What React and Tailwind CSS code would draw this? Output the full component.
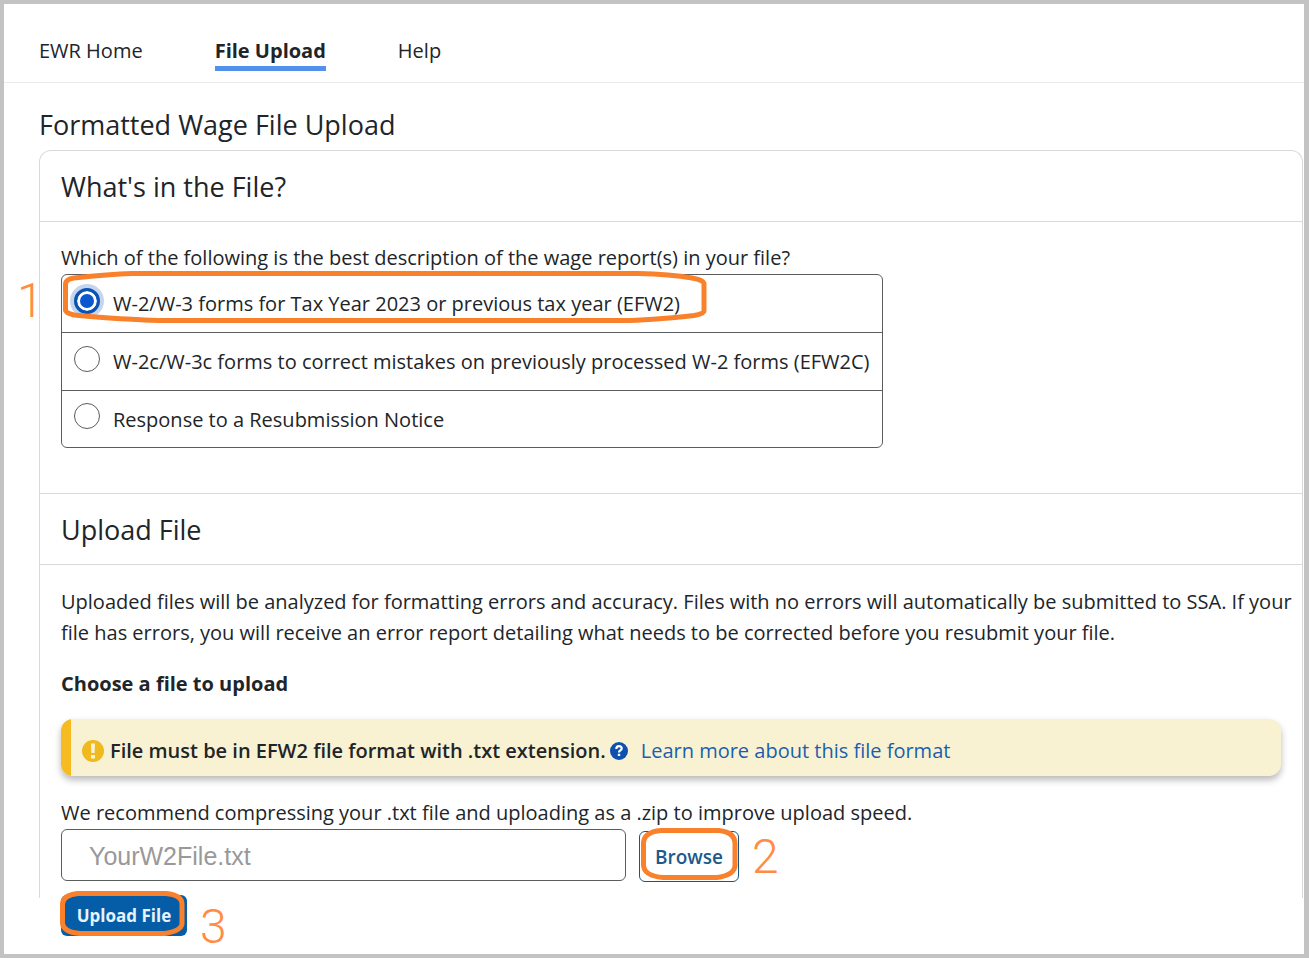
import { useState } from "react";
import clsx from "clsx";

const NAV_ITEMS = ["EWR Home", "File Upload", "Help"];

const REPORT_TYPES = [
  { value: "efw2", label: "W-2/W-3 forms for Tax Year 2023 or previous tax year (EFW2)" },
  { value: "efw2c", label: "W-2c/W-3c forms to correct mistakes on previously processed W-2 forms (EFW2C)" },
  { value: "resub", label: "Response to a Resubmission Notice" },
];

export default function App() {
  const [reportType, setReportType] = useState("efw2");
  const [fileName, setFileName] = useState("YourW2File.txt");

  return (
    <div className="min-h-screen border-4 border-r-[5px] border-[#c3c3c3] bg-white font-['Open_Sans',sans-serif] text-[20px] leading-[31px] text-[#212529]">
      {/* Top navigation */}
      <nav className="flex h-[79px] items-center gap-[72px] border-b border-[#ebebeb] pt-5 pl-[35px]">
        {NAV_ITEMS.map((item) => (
          <a
            key={item}
            href="#"
            className={clsx(
              "border-b-[5px]",
              item === "File Upload" ? "border-[#5291ea] font-bold" : "border-transparent"
            )}
          >
            {item}
          </a>
        ))}
      </nav>

      <main className="pr-px pl-[35px]">
        <h1 className="pt-6 pb-[7px] text-[27px] leading-[36px]">Formatted Wage File Upload</h1>

        <div className="rounded-t-xl border border-b-0 border-[#d9d9d9]">
          <SectionTitle>What's in the File?</SectionTitle>

          <fieldset className="px-[21px] pt-5 pb-[45px]">
            <legend className="float-left mb-px">
              Which of the following is the best description of the wage report(s) in your file?
            </legend>
            <div className="relative clear-both max-w-[822px] rounded-md border border-[#5c5c5c]">
              <div>
                {REPORT_TYPES.map((type) => (
                  <ReportOption
                    key={type.value}
                    {...type}
                    checked={reportType === type.value}
                    onSelect={setReportType}
                  />
                ))}
              </div>
              <OptionMarker />
              <StepNumber className="top-0 -left-[45px]">1</StepNumber>
            </div>
          </fieldset>

          <div className="border-t border-[#d9d9d9]">
            <SectionTitle>Upload File</SectionTitle>
          </div>

          <div className="px-[21px] pt-[21px] pb-4">
            <p className="-mr-3">
              Uploaded files will be analyzed for formatting errors and accuracy. Files with no errors will
              automatically be submitted to SSA. If your file has errors, you will receive an error report
              detailing what needs to be corrected before you resubmit your file.
            </p>
            <h3 className="mt-5 font-bold">Choose a file to upload</h3>

            <div className="mt-5 flex h-[57px] overflow-hidden rounded-xl bg-[#f9f2d2] shadow-[0_4px_7px_rgba(0,0,0,0.28)]">
              <div className="w-[10px] shrink-0 bg-[#f5bb20]" />
              <div className="flex items-center pt-1.5 pl-[11px]">
                <AlertIcon />
                <strong className="ml-[6px] font-semibold">
                  File must be in EFW2 file format with .txt extension.
                </strong>
                <HelpIcon />
                <a href="#" className="ml-[13px] text-[#1a5fae]">
                  Learn more about this file format
                </a>
              </div>
            </div>

            <label htmlFor="wage-file" className="mt-[21px] block">
              We recommend compressing your .txt file and uploading as a .zip to improve upload speed.
            </label>
            <div className="mt-px flex items-start">
              <input
                id="wage-file"
                type="text"
                value={fileName}
                onChange={(e) => setFileName(e.target.value)}
                className="h-[52px] w-[565px] rounded-md border border-[#5c5c5c] pt-0.5 pl-[27px] font-['Liberation_Sans',sans-serif] text-[25px] text-[#999]"
              />
              <div className="relative mt-0.5 ml-[13px]">
                <button
                  type="button"
                  className="h-[51px] w-[100px] rounded-md border border-[#1b5480] pt-0.5 text-[19px] font-semibold text-[#1b5a8a]"
                >
                  Browse
                </button>
                <BrowseMarker />
                <StepNumber className="top-0 left-[113px]">2</StepNumber>
              </div>
            </div>
          </div>
        </div>

        <div className="relative -mt-[3px] ml-[22px] w-[126px]">
          <button
            type="button"
            className="block h-[41px] w-full rounded-md bg-[#045da6] text-[17px] font-bold text-[#e6f3ff]"
          >
            Upload File
          </button>
          <UploadMarker />
          <StepNumber className="top-1.5 left-[139px]">3</StepNumber>
        </div>
      </main>
    </div>
  );
}

function SectionTitle({ children }) {
  return (
    <h2 className="flex h-[71px] items-center border-b border-[#d9d9d9] pt-0.5 pl-[21px] text-[27px] leading-[36px]">
      {children}
    </h2>
  );
}

function ReportOption({ value, label, checked, onSelect }) {
  return (
    <label className="flex h-[58px] items-center border-b border-[#5c5c5c] pl-3 last:h-[56px] last:border-b-0">
      <input
        type="radio"
        name="report-type"
        value={value}
        checked={checked}
        onChange={() => onSelect(value)}
        className="mb-1.5 size-[26px] shrink-0 appearance-none rounded-full border border-[#5c5c5c] bg-white checked:border-[3px] checked:border-[#0b52b5] checked:bg-[#0b57d0] checked:shadow-[inset_0_0_0_3px_#fff,0_0_0_4px_#c5d6ec]"
      />
      <span className="ml-[13px]">{label}</span>
    </label>
  );
}

function StepNumber({ className, children }) {
  return (
    <span
      className={clsx(
        "pointer-events-none absolute font-['Roboto',sans-serif] text-[48px] leading-[52px] font-light text-[#ff8c42]",
        className
      )}
    >
      {children}
    </span>
  );
}

// Hand-drawn outlines around the control of each step
function OptionMarker() {
  return (
    <svg
      className="pointer-events-none absolute -top-[4px] left-0"
      width="650"
      height="54"
      viewBox="0 0 650 54"
      fill="none"
      stroke="#fa812b"
      strokeWidth="5"
      strokeLinejoin="round"
    >
      <path d="M70 2.500 H576 C602 3 616 4.500 630 7 Q642 9 642 13 V40 Q642 43 632 44.500 C600 48 580 49.500 560 49.500 H96 C60 48 30 46 12 44 Q3 42 3.500 39 V13 Q4 8 12 7 C30 5 50 3 70 2.500 Z" />
    </svg>
  );
}

function BrowseMarker() {
  return (
    <svg
      className="pointer-events-none absolute -top-[4px] left-0"
      width="102"
      height="56"
      viewBox="0 0 102 56"
      fill="none"
      stroke="#fa812b"
      strokeWidth="5"
    >
      <path d="M22 3.500 H80 Q96 5 96 17 V39 Q95 48 78 50.500 H24 Q5 49 4.500 38 V16 Q5 5 22 3.500 Z" />
    </svg>
  );
}

function UploadMarker() {
  return (
    <svg
      className="pointer-events-none absolute -top-[5px] -left-px"
      width="130"
      height="50"
      viewBox="0 0 130 50"
      fill="none"
      stroke="#fa812b"
      strokeWidth="5"
    >
      <path d="M18 3.500 H106 Q122 5 122 14 V34 Q121 41 105 43.500 H20 Q3 42 2.500 33 V14 Q3 5 18 3.500 Z" />
    </svg>
  );
}

function AlertIcon() {
  return (
    <svg className="shrink-0" width="22" height="22" viewBox="0 0 22 22" aria-hidden="true">
      <circle cx="11" cy="11" r="11" fill="#efb91f" />
      <path d="M9 3.500h4l-.4 9.500H9.400zM9 15h4v3.500H9z" fill="#fbf3d5" />
    </svg>
  );
}

function HelpIcon() {
  return (
    <svg className="ml-1 shrink-0" width="18" height="18" viewBox="0 0 18 18" aria-hidden="true">
      <circle cx="9" cy="9" r="9" fill="#0d50b0" />
      <path d="M6.300 7C6.300 5 7.400 4.200 9 4.200S11.700 5 11.700 6.600C11.700 8.400 9 8.500 9 10.400" fill="none" stroke="#fff" strokeWidth="2.200" />
      <path d="M7.800 11.800h2.400v2.300H7.800z" fill="#fff" />
    </svg>
  );
}
